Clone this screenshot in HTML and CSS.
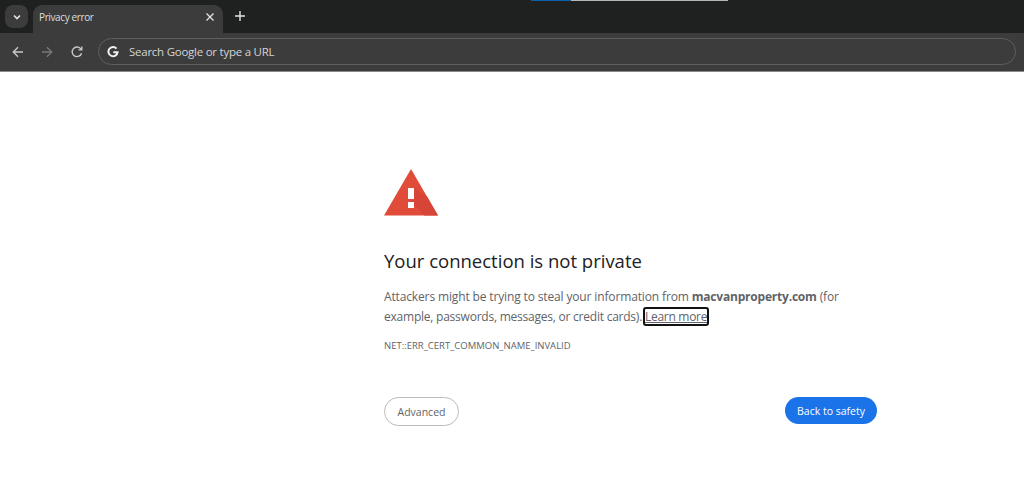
FILE: index.html
```html
<!DOCTYPE html>
<html lang="en">
<head>
    <meta charset="UTF-8">
    <meta name="viewport" content="width=device-width, initial-scale=1.0">
    <title>Privacy error</title>
    <link rel="stylesheet" href="styles.css">
</head>
<body>
    <div class="tabstrip">
        <div class="progress">
            <span class="progress-blue"></span>
            <span class="progress-grey"></span>
        </div>
        <div class="tab-search">
            <svg width="10" height="10" viewBox="0 0 10 10"><path d="M2 3.5 5 6.5 8 3.5" fill="none" stroke="#e3e3e3" stroke-width="1.7"/></svg>
        </div>
        <div class="tab">
            <span class="tab-title">Privacy error</span>
            <svg width="10" height="10" viewBox="0 0 10 10"><path d="M1.5 1.5 8.5 8.5M8.5 1.5 1.5 8.5" stroke="#e3e3e3" stroke-width="1.3"/></svg>
        </div>
        <svg class="new-tab" width="12" height="12" viewBox="0 0 12 12"><path d="M6 1V11M1 6H11" stroke="#e3e3e3" stroke-width="1.4"/></svg>
    </div>

    <div class="toolbar">
        <svg class="nav" width="14" height="14" viewBox="0 0 14 14"><path d="M12 7H2.5M7 2.3 2.3 7 7 11.7" fill="none" stroke="#c7c7c7" stroke-width="1.4"/></svg>
        <svg class="nav" width="14" height="14" viewBox="0 0 14 14"><path d="M2 7H11.5M7 2.3 11.7 7 7 11.7" fill="none" stroke="#787878" stroke-width="1.4"/></svg>
        <svg class="nav" width="14" height="14" viewBox="0 0 14 14"><path d="M11.6 8.2A4.8 4.8 0 1 1 10.6 3.6L11.8 4.8M11.8 1.6V4.9H8.5" fill="none" stroke="#c7c7c7" stroke-width="1.4"/></svg>
        <div class="omnibox">
            <svg width="12" height="12" viewBox="0 0 12 12"><path d="M9.5 2.6A4.6 4.6 0 1 0 10.6 6.2H6.3" fill="none" stroke="#f1f1f1" stroke-width="2"/></svg>
            <span class="omnibox-text">Search Google or type a URL</span>
        </div>
    </div>

    <div class="page">
        <div class="interstitial">
            <svg class="warning" width="54" height="48" viewBox="0 0 54 48">
                <path d="M27 1 54 47.5H0Z" fill="#e04b3a"/>
                <path d="M30 20V31L27 34 40.5 47.5H54L43 28.5 30 20Z" fill="#d64537"/>
                <rect x="24" y="20" width="6" height="11" fill="#fff"/>
                <rect x="24" y="34" width="6" height="6" fill="#fff"/>
            </svg>
            <h1>Your connection is not private</h1>
            <p class="message">Attackers might be trying to steal your information from <strong>macvanproperty.com</strong> (for <span class="tight">example, passwords, messages, or credit cards).</span> <a class="learn-more" href="#">Learn more</a></p>
            <p class="error-code">NET::ERR_CERT_COMMON_NAME_INVALID</p>
            <div class="buttons">
                <button class="btn-advanced">Advanced</button>
                <button class="btn-back">Back to safety</button>
            </div>
        </div>
    </div>
</body>
</html>
```

FILE: styles.css
```css
body {
    margin: 0;
    background: #fff;
    font-family: "Open Sans", "Noto Sans", Arial, sans-serif;
    overflow: hidden;
}
.tabstrip {
    position: relative;
    height: 33px;
    background: #1f2120;
    display: flex;
    align-items: flex-end;
    padding-left: 5px;
    box-sizing: border-box;
}
.progress {
    position: absolute;
    top: 0;
    left: 531px;
    display: flex;
    height: 1px;
}
.progress-blue {
    width: 40px;
    background: #0b5fa8;
}
.progress-grey {
    width: 157px;
    background: #b5b5b5;
}
.tab-search {
    width: 23px;
    height: 23px;
    margin-bottom: 5px;
    border-radius: 8px;
    background: #3c3c3c;
    display: flex;
    align-items: center;
    justify-content: center;
}
.tab {
    width: 190px;
    height: 28px;
    margin-left: 5px;
    padding: 0 8px 4px 6px;
    box-sizing: border-box;
    border-radius: 9px 9px 0 0;
    background: #3c3c3c;
    display: flex;
    align-items: center;
    justify-content: space-between;
}
.tab-title {
    color: #dedede;
    font-size: 10px;
    letter-spacing: -0.38px;
}
.new-tab {
    margin: 0 0 11px 11px;
}
.toolbar {
    height: 39px;
    padding: 0 0 1px 11px;
    box-sizing: border-box;
    background: #3c3c3c;
    border-bottom: 1px solid #8a8a8a;
    display: flex;
    align-items: center;
}
.nav {
    margin-right: 15px;
}
.nav:nth-child(2) {
    margin-right: 16px;
}
.nav:nth-child(3) {
    margin-right: 14px;
}
.omnibox {
    flex: none;
    width: 918px;
    height: 27px;
    box-sizing: border-box;
    padding-left: 8px;
    border: 1px solid #5f5f5f;
    border-radius: 14px;
    display: flex;
    align-items: center;
    gap: 10px;
}
.omnibox-text {
    color: #d4d4d4;
    font-size: 11.5px;
    letter-spacing: -0.25px;
}
.page {
    padding-top: 96px;
}
.interstitial {
    width: 493px;
    margin-left: 384px;
}
.warning {
    display: block;
}
h1 {
    margin: 32px 0 0;
    color: #202124;
    font-size: 18.5px;
    font-weight: 400;
    line-height: 26px;
}
.message {
    margin: 13px 0 0;
    color: #5f6368;
    font-size: 12px;
    letter-spacing: -0.14px;
    line-height: 20px;
}
.message strong {
    font-weight: 700;
    letter-spacing: -0.2px;
}
.tight {
    letter-spacing: -0.23px;
}
.learn-more {
    margin-left: -1px;
    padding: 0 1px;
    color: #5f6368;
    letter-spacing: -0.3px;
    border-radius: 2px;
    outline: 2px solid #111;
    outline-offset: -1px;
}
.error-code {
    margin: 12px 0 0;
    color: #5f6368;
    font-size: 9.5px;
    line-height: 13px;
}
.buttons {
    margin-top: 45px;
    display: flex;
    justify-content: space-between;
    align-items: flex-start;
}
button {
    font-family: inherit;
    font-size: 10.5px;
    border-radius: 15px;
    cursor: pointer;
}
.btn-advanced {
    width: 75px;
    height: 29px;
    background: #fff;
    border: 1px solid #bbb;
    color: #5f6368;
}
.btn-back {
    width: 92px;
    height: 27px;
    background: #1a73e8;
    border: 0;
    color: #fff;
}
```
